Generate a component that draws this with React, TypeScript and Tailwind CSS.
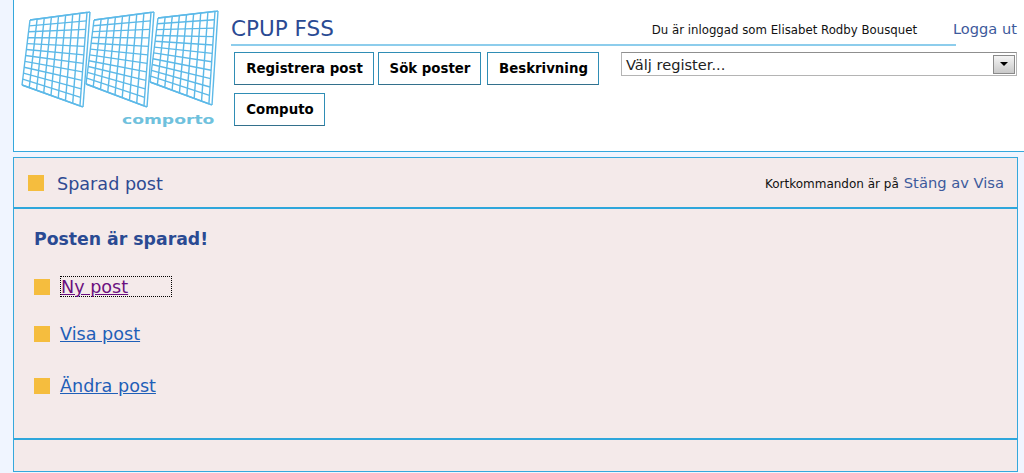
const verdana = { fontFamily: '"DejaVu Sans", Verdana, sans-serif' }

type P = [number, number]

const mix = (a: P, b: P, t: number): P => [a[0] + (b[0] - a[0]) * t, a[1] + (b[1] - a[1]) * t]

// one tilted grid of the logo, corners are top left, top right, bottom right, bottom left
function Wall({ tl, tr, br, bl }: { tl: P; tr: P; br: P; bl: P }) {
  const cols = 8
  const rows = 11
  const lines = []
  for (let i = 0; i <= cols; i++) {
    const a = mix(tl, tr, (i / cols) * 0.95)
    const b = mix(bl, br, (i / cols) * 0.95)
    lines.push(<line key={'c' + i} x1={a[0]} y1={a[1]} x2={b[0]} y2={b[1]} />)
  }
  for (let i = 0; i <= rows; i++) {
    const a = mix(tl, bl, i / rows)
    const b = mix(mix(tl, tr, 0.95), mix(bl, br, 0.95), i / rows)
    lines.push(<line key={'r' + i} x1={a[0]} y1={a[1]} x2={b[0]} y2={b[1]} />)
  }
  lines.push(<line key="e1" x1={tr[0]} y1={tr[1]} x2={br[0]} y2={br[1]} />)
  lines.push(<line key="e2" x1={tl[0]} y1={tl[1]} x2={tr[0]} y2={tr[1]} />)
  lines.push(<line key="e3" x1={bl[0]} y1={bl[1]} x2={br[0]} y2={br[1]} />)
  return <g>{lines}</g>
}

function Logo() {
  return (
    <div className="relative h-[130px] w-[217px] shrink-0">
      <svg width="217" height="130" viewBox="14 5 217 130" stroke="#5cb9e8" strokeWidth="1.4" fill="none">
        <Wall tl={[30, 25]} tr={[90, 17]} br={[83, 112]} bl={[22, 90]} />
        <Wall tl={[94, 25]} tr={[154, 17]} br={[147, 112]} bl={[86, 89]} />
        <Wall tl={[158, 23]} tr={[218, 16]} br={[212, 110]} bl={[150, 87]} />
      </svg>
      <span
        className="absolute left-[108px] top-[113px] origin-left scale-x-[1.32] text-[13px] leading-[14px] font-bold text-[#6fc1dd]"
        style={verdana}
      >
        comporto
      </span>
    </div>
  )
}

function NavButton({ label, className }: { label: string; className: string }) {
  return (
    <a
      className={
        'flex h-[33px] items-center justify-center border border-[#2f8db5] border-b-[#33708c] bg-white pl-[1px] text-[13.33px] font-bold text-black ' +
        className
      }
    >
      {label}
    </a>
  )
}

function Square() {
  return <span className="h-4 w-4 shrink-0 bg-[#f5bd3e]" />
}

export default function App() {
  return (
    <div className="h-[473px] w-[1024px] overflow-hidden bg-[#f0f5ff] pl-[13px]" style={verdana}>
      {/* Header */}
      <header className="flex h-[152px] border-b border-l border-[#35a8dc] bg-white">
        <Logo />
        <div className="w-[793px]">
          <div className="flex items-start">
            <div className="mt-[16px] flex h-[30px] w-[725px] items-center justify-between border-b-2 border-[#8dcdec] pr-[39px]">
              <span className="mt-[-2px] text-[21.5px] leading-[26px] text-[#2a4a93]">CPUP FSS</span>
              <span className="mt-[1px] text-[11.75px] text-[#111]">Du är inloggad som Elisabet Rodby Bousquet</span>
            </div>
            <a className="ml-[-3px] mt-[19px] text-[14.6px] leading-[20px] text-[#3d5a9c]">Logga ut</a>
          </div>
          <div className="mt-[6px] flex items-start">
            <div className="flex w-[390px] shrink-0 flex-wrap gap-y-2 pl-[3px]">
              <NavButton label="Registrera post" className="w-[140px]" />
              <NavButton label="Sök poster" className="ml-[4px] w-[103px]" />
              <NavButton label="Beskrivning" className="ml-[6px] w-[112px]" />
              <NavButton label="Computo" className="w-[91px]" />
            </div>
            <div className="flex h-[24px] w-[396px] items-center justify-between border border-[#b4b4b4] border-t-[#8f8f8f] bg-white pl-1 pr-[1px]">
              <span className="mt-[1px] text-[14.6px] text-[#222]">Välj register...</span>
              <span className="flex h-[19px] w-[22px] items-center justify-center border border-[#8a8a8a] bg-gradient-to-b from-[#f4f4f4] to-[#c9c9c9]">
                <span className="h-0 w-0 border-x-[4px] border-t-[4px] border-x-transparent border-t-black" />
              </span>
            </div>
          </div>
        </div>
      </header>

      {/* Panel */}
      <main className="mt-[5px] flex h-[315px] w-[1005px] flex-col border border-[#35a8dc] bg-[#f4eaea]">
        <div className="flex h-[51px] shrink-0 items-center justify-between border-b-2 border-[#2ea6db] pl-[14px] pr-[13px] pt-[2px]">
          <div className="flex items-center">
            <Square />
            <span className="ml-[13px] mt-[1px] text-[17.6px] text-[#2f4a92]">Sparad post</span>
          </div>
          <div className="flex items-center">
            <span className="mt-[2px] text-[12px] text-[#111]">Kortkommandon är på</span>
            <a className="ml-[5px] text-[14.7px] text-[#3d5a9c]">Stäng av Visa</a>
          </div>
        </div>
        <div className="h-[231px] shrink-0 border-b-2 border-[#2ea6db] pl-[20px] pt-[19px]">
          <h2 className="text-[17.3px] leading-[22px] font-bold text-[#2a4a93]">Posten är sparad!</h2>
          <div className="mt-[26px] flex h-[21px] items-center">
            <Square />
            <a className="ml-[10px] block h-[21px] w-[112px] border border-dotted border-black text-[17.6px] leading-[21px] text-[#6b1080] underline">
              Ny post
            </a>
          </div>
          <div className="mt-[26px] flex h-[21px] items-center">
            <Square />
            <a className="ml-[10px] mt-[2px] text-[17.6px] text-[#1f5fb8] underline">Visa post</a>
          </div>
          <div className="mt-[31px] flex h-[21px] items-center">
            <Square />
            <a className="ml-[10px] mt-[2px] text-[17.6px] text-[#1f5fb8] underline">Ändra post</a>
          </div>
        </div>
      </main>
    </div>
  )
}
